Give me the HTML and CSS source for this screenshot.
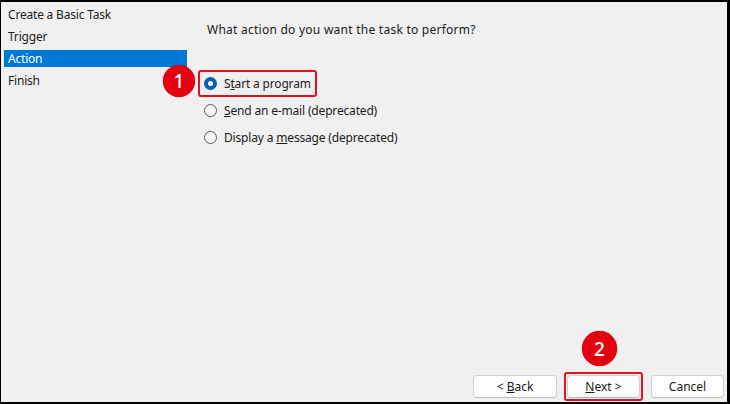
FILE: index.html
```html
<!DOCTYPE html>
<html lang="en">
<head>
    <meta charset="UTF-8">
    <meta name="viewport" content="width=device-width, initial-scale=1.0">
    <title>Create Basic Task Wizard</title>
    <link rel="stylesheet" href="styles.css">
</head>
<body>

    <div class="window">
        <div class="sidebar">
            <div class="step">Create a Basic Task</div>
            <div class="step">Trigger</div>
            <div class="step active">Action</div>
            <div class="step">Finish</div>
        </div>

        <div class="content">
            <p class="question">What action do you want the task to perform?</p>

            <div class="options">
                <label class="option marked">
                    <span class="radio checked"></span>
                    <span>S<u>t</u>art a program</span>
                </label>
                <label class="option">
                    <span class="radio"></span>
                    <span><u>S</u>end an e-mail (deprecated)</span>
                </label>
                <label class="option">
                    <span class="radio"></span>
                    <span>Display a <u>m</u>essage (deprecated)</span>
                </label>
            </div>

            <div class="buttons">
                <button class="btn btn-back">&lt; <u>B</u>ack</button>
                <span class="btn-mark">
                    <button class="btn"><u>N</u>ext &gt;</button>
                </span>
                <button class="btn">Cancel</button>
            </div>
        </div>

        <!-- step markers drawn over the dialog -->
        <span class="badge badge-one">1</span>
        <span class="badge badge-two">2</span>
    </div>

</body>
</html>
```

FILE: styles.css
```css
body {
    margin: 0;
    font-family: "Noto Sans", "Open Sans", sans-serif;
    font-size: 12px;
    color: #1b1b1b;
    background-color: #f0f0f0;
}
.window {
    position: relative;
    width: 730px;
    height: 404px;
    box-sizing: border-box;
    border-top: 2px solid #000;
    border-left: 1px solid #000;
    border-right: 3px solid #000;
    border-bottom: 2px solid #000;
    background-color: #f0f0f0;
    display: flex;
}
.sidebar {
    width: 186px;
    padding: 4px 0 0 3px;
    box-sizing: border-box;
}
.step {
    height: 17px;
    line-height: 17px;
    padding-left: 4px;
    margin-bottom: 5px;
    letter-spacing: -0.2px;
}
.step.active {
    background-color: #0078d7;
    color: white;
}
.content {
    flex: 1;
    display: flex;
    flex-direction: column;
    padding: 20px 3px 0 11px;
}
.question {
    margin: 0 0 32px 9px;
    line-height: 16px;
    letter-spacing: 0.25px;
}
.options {
    display: flex;
    flex-direction: column;
    align-items: flex-start;
}
.option {
    height: 27px;
    box-sizing: border-box;
    display: flex;
    align-items: center;
    padding: 0 4px 0 4px;
    border: 2px solid transparent;
    border-radius: 3px;
    letter-spacing: -0.17px;
}
.option.marked {
    border-color: #e3101e;
}
.radio {
    width: 13px;
    height: 13px;
    box-sizing: border-box;
    border: 1px solid #5c5c5c;
    border-radius: 50%;
    background-color: #f7f7f7;
    margin-right: 7px;
}
.radio.checked {
    border: 4px solid #0a5fb4;
    background-color: #fff;
}
.buttons {
    margin-top: auto;
    margin-bottom: 1px;
    display: flex;
    justify-content: flex-end;
    align-items: center;
}
.btn {
    width: 73px;
    height: 23px;
    padding: 0;
    font-family: inherit;
    font-size: 12px;
    color: #1b1b1b;
    background-color: #fdfdfd;
    border: 1px solid #d0d0d0;
    border-bottom-color: #b8b8b8;
    border-radius: 4px;
}
.btn-back {
    width: 84px;
    margin-right: 7px;
}
.btn-mark {
    display: flex;
    padding: 1px;
    border: 2px solid #e3101e;
    border-radius: 3px;
    margin-right: 8px;
}
.badge {
    position: absolute;
    display: flex;
    align-items: center;
    justify-content: center;
    border-radius: 50%;
    background-color: #e3000f;
    box-shadow: 0 0 1px #a00;
    color: white;
    font-size: 19px;
    font-weight: 500;
}
.badge-one {
    left: 162px;
    top: 63px;
    width: 32px;
    height: 32px;
}
.badge-two {
    left: 581px;
    top: 329px;
    width: 35px;
    height: 35px;
}
```
